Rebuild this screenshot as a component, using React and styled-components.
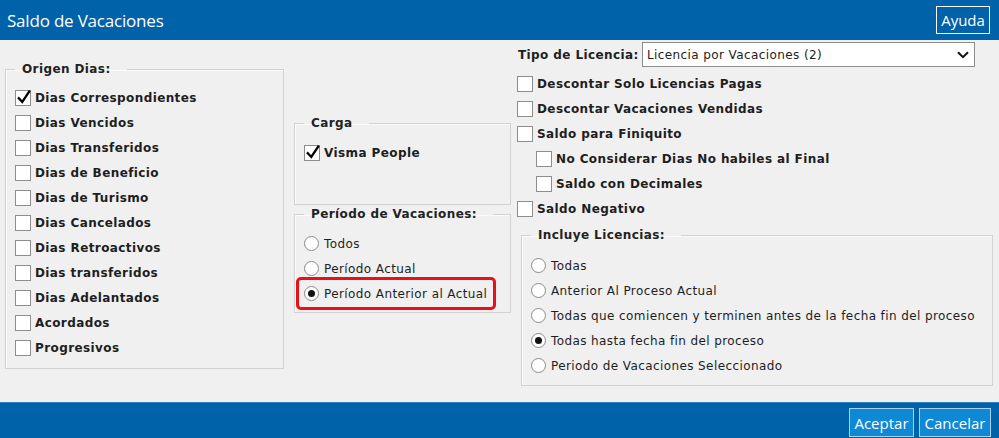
import React from 'react';
import styled, { createGlobalStyle } from 'styled-components';

const GlobalStyle = createGlobalStyle`
  html, body {
    margin: 0;
    padding: 0;
    background: #f0f0f0;
  }
  body {
    font-family: "DejaVu Sans", Verdana, sans-serif;
    font-size: 12px;
    letter-spacing: 0.4px;
    color: #1e1e1e;
  }
`;

const Dialog = styled.div`
  width: 999px;
  height: 438px;
  display: flex;
  flex-direction: column;
  background: #f0f0f0;
  overflow: hidden;
`;

const TitleBar = styled.div`
  height: 40px;
  flex: 0 0 40px;
  background: #0062a8;
  display: flex;
  align-items: center;
  justify-content: space-between;
  padding: 0 9px 0 7px;
  box-sizing: border-box;
`;

const Title = styled.h1`
  margin: 0;
  font-family: "Open Sans", "Noto Sans", sans-serif;
  font-weight: 400;
  font-size: 17px;
  color: #fff;
  letter-spacing: -0.2px;
`;

const BarButton = styled.button`
  height: ${props => props.$height || 28}px;
  min-width: ${props => props.$width || 54}px;
  padding: 0 4px;
  box-sizing: border-box;
  background: ${props => props.$fill || 'transparent'};
  border: 1.5px solid ${props => props.$edge || '#fff'};
  color: #fff;
  font-family: "Open Sans", "Noto Sans", sans-serif;
  font-size: 15px;
  letter-spacing: normal;
  cursor: pointer;
`;

const Body = styled.div`
  flex: 1;
  display: flex;
  align-items: flex-start;
`;

const Column = styled.div`
  width: ${props => props.$width}px;
  margin-left: ${props => props.$offset}px;
  padding-top: ${props => props.$top || 0}px;
  display: flex;
  flex-direction: column;
`;

const Group = styled.fieldset`
  margin: ${props => props.$gap || 0}px 0 0 ${props => props.$indent || 0}px;
  padding: ${props => props.$padTop || 9}px 9px 0 9px;
  height: ${props => props.$height}px;
  box-sizing: border-box;
  border: 1px solid #d2d2d2;
  box-shadow: inset 1px 1px 0 #fbfbfb;
  min-width: 0;
`;

const Legend = styled.legend`
  padding: 0 16px 0 7px;
  font-weight: 700;
  font-size: 12px;
  line-height: 14px;
  color: #222;
`;

const Row = styled.label`
  position: relative;
  height: 25px;
  display: flex;
  align-items: center;
  padding-left: ${props => props.$indent || 0}px;
  gap: ${props => (props.$radio ? 5 : 4)}px;
  font-weight: ${props => (props.$bold ? 700 : 400)};
  color: #1e1e1e;
  white-space: nowrap;

  ${props => props.$marked && `
    &::after {
      content: '';
      position: absolute;
      left: -8px;
      top: -4px;
      bottom: -4px;
      width: 200px;
      border: 3px solid #ea0f18;
      border-radius: 5px;
      box-sizing: border-box;
    }
  `}
`;

const Box = styled.span`
  position: relative;
  flex: 0 0 16px;
  width: 16px;
  height: 16px;
  box-sizing: border-box;
  background: #fff;
  border: 1px solid #8d8d8d;

  svg {
    position: absolute;
    left: 0;
    top: -2px;
    overflow: visible;
  }
`;

const Circle = styled.span`
  flex: 0 0 15px;
  width: 15px;
  height: 15px;
  box-sizing: border-box;
  border-radius: 50%;
  background: #fff;
  border: 1px solid #8a8a8a;
  display: flex;
  align-items: center;
  justify-content: center;

  &::before {
    content: '';
    width: 7px;
    height: 7px;
    border-radius: 50%;
    background: ${props => (props.$on ? '#111' : 'transparent')};
  }
`;

const SelectRow = styled.div`
  height: 25px;
  margin-top: 2px;
  display: flex;
  align-items: center;
  padding-left: 1px;
`;

const SelectLabel = styled.span`
  width: 124px;
  font-weight: 700;
  color: #1e1e1e;
`;

const SelectBox = styled.div`
  width: 333px;
  height: 25px;
  box-sizing: border-box;
  border: 1px solid #8c8c8c;
  background: #fff;
  display: flex;
  align-items: center;
  justify-content: space-between;
  padding: 0 5px 0 4px;
  color: #222;
`;

const List = styled.div`
  margin-top: ${props => props.$top || 0}px;
  display: flex;
  flex-direction: column;
`;

const Footer = styled.div`
  height: 36px;
  flex: 0 0 36px;
  background: #0062a8;
  display: flex;
  justify-content: flex-end;
  align-items: flex-start;
  gap: 5px;
  padding: 5px 8px 0 0;
  box-sizing: border-box;
  border-top: 1px solid #2f7fbf;
`;

const Check = ({ label, checked, bold = true, indent }) => (
  <Row $bold={bold} $indent={indent}>
    <Box>
      {checked && (
        <svg width="16" height="16" viewBox="0 0 16 16">
          <path d="M2.8 9.2 L6.3 13 L13.2 2.6" fill="none" stroke="#000" strokeWidth="2.3" strokeLinecap="square" />
        </svg>
      )}
    </Box>
    {label}
  </Row>
);

const Radio = ({ label, checked, marked }) => (
  <Row $radio $marked={marked}>
    <Circle $on={checked} />
    {label}
  </Row>
);

const origen = [
  ['Dias Correspondientes', true],
  ['Dias Vencidos'],
  ['Dias Transferidos'],
  ['Dias de Beneficio'],
  ['Dias de Turismo'],
  ['Dias Cancelados'],
  ['Dias Retroactivos'],
  ['Dias transferidos'],
  ['Dias Adelantados'],
  ['Acordados'],
  ['Progresivos'],
];

const licencias = [
  'Todas',
  'Anterior Al Proceso Actual',
  'Todas que comiencen y terminen antes de la fecha fin del proceso',
  'Todas hasta fecha fin del proceso',
  'Periodo de Vacaciones Seleccionado',
];

export default function App() {
  return (
    <>
      <GlobalStyle />
      <Dialog>
        <TitleBar>
          <Title>Saldo de Vacaciones</Title>
          <BarButton>Ayuda</BarButton>
        </TitleBar>

        <Body>
          <Column $width={279} $offset={5} $top={22}>
            <Group $height={307} $padTop={9}>
              <Legend>Origen Dias:</Legend>
              {origen.map(([label, checked]) => (
                <Check key={label} label={label} checked={checked} />
              ))}
            </Group>
          </Column>

          <Column $width={217} $offset={10} $top={76}>
            <Group $height={89} $padTop={10}>
              <Legend>Carga</Legend>
              <Check label="Visma People" checked />
            </Group>
            <Group $height={106} $padTop={10} $gap={2}>
              <Legend>Período de Vacaciones:</Legend>
              <Radio label="Todos" />
              <Radio label="Período Actual" />
              <Radio label="Período Anterior al Actual" checked marked />
            </Group>
          </Column>

          <Column $width={476} $offset={6}>
            <SelectRow>
              <SelectLabel>Tipo de Licencia:</SelectLabel>
              <SelectBox>
                <span>Licencia por Vacaciones (2)</span>
                <svg width="12" height="8" viewBox="0 0 12 8">
                  <path d="M1 1.2 L6 6.2 L11 1.2" fill="none" stroke="#111" strokeWidth="2" />
                </svg>
              </SelectBox>
            </SelectRow>
            <List $top={4}>
              <Check label="Descontar Solo Licencias Pagas" />
              <Check label="Descontar Vacaciones Vendidas" />
              <Check label="Saldo para Finiquito" />
              <Check label="No Considerar Dias No habiles al Final" indent={19} />
              <Check label="Saldo con Decimales" indent={19} />
              <Check label="Saldo Negativo" />
            </List>
            <Group $height={158} $padTop={11} $gap={7} $indent={4}>
              <Legend>Incluye Licencias:</Legend>
              {licencias.map(label => (
                <Radio key={label} label={label} checked={label === 'Todas hasta fecha fin del proceso'} />
              ))}
            </Group>
          </Column>
        </Body>

        <Footer>
          <BarButton $height={29} $width={65} $fill="#0f88d6" $edge="#a6d3f3">Aceptar</BarButton>
          <BarButton $height={29} $width={72} $fill="#0f88d6" $edge="#a6d3f3">Cancelar</BarButton>
        </Footer>
      </Dialog>
    </>
  );
}
